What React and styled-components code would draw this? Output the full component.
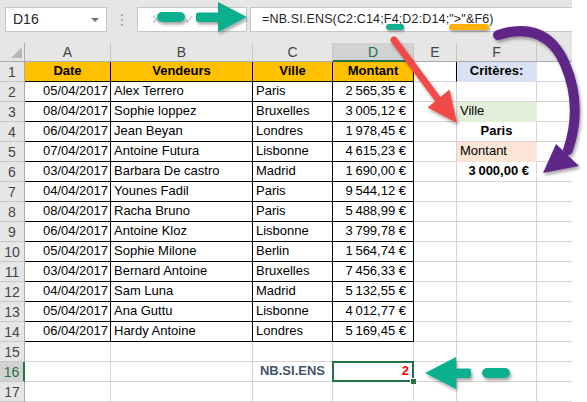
import styled, { createGlobalStyle } from "styled-components";

const GlobalStyle = createGlobalStyle`
  html, body { margin: 0; padding: 0; background: #ffffff; }
  body { font-family: "Liberation Sans", Arial, sans-serif; }
`;

const COLS = ["A", "B", "C", "D", "E", "F", "G"];
const WIDTHS = [86, 142, 80, 81, 43, 80, 80];

const sales = [
  ["05/04/2017", "Alex Terrero", "Paris", "2\u202f565,35 €"],
  ["08/04/2017", "Sophie loppez", "Bruxelles", "3\u202f005,12 €"],
  ["06/04/2017", "Jean Beyan", "Londres", "1\u202f978,45 €"],
  ["07/04/2017", "Antoine Futura", "Lisbonne", "4\u202f615,23 €"],
  ["03/04/2017", "Barbara De castro", "Madrid", "1\u202f690,00 €"],
  ["04/04/2017", "Younes Fadil", "Paris", "9\u202f544,12 €"],
  ["08/04/2017", "Racha Bruno", "Paris", "5\u202f488,99 €"],
  ["06/04/2017", "Antoine Kloz", "Lisbonne", "3\u202f799,78 €"],
  ["05/04/2017", "Sophie Milone", "Berlin", "1\u202f564,74 €"],
  ["03/04/2017", "Bernard Antoine", "Bruxelles", "7\u202f456,33 €"],
  ["04/04/2017", "Sam Luna", "Madrid", "5\u202f132,55 €"],
  ["05/04/2017", "Ana Guttu", "Lisbonne", "4\u202f012,77 €"],
  ["06/04/2017", "Hardy Antoine", "Londres", "5\u202f169,45 €"],
];

// criteria block in column F
const criteria = {
  1: { text: "Critères:", bold: true, align: "center", bg: "#d9e1f2" },
  3: { text: "Ville", align: "left", bg: "#e2efda" },
  4: { text: "Paris", bold: true, align: "center" },
  5: { text: "Montant", align: "left", bg: "#fce4d6" },
  6: { text: "3\u202f000,00 €", bold: true, align: "money" },
};

function cellFor(row, col) {
  const ci = COLS.indexOf(col);
  const inTable = row <= 14 && ci <= 3;
  const cell = { text: "", align: "left", table: inTable };

  if (row === 1 && ci <= 3) {
    return { ...cell, text: ["Date", "Vendeurs", "Ville", "Montant"][ci], bold: true, align: "center", bg: "#ffc000" };
  }
  if (row >= 2 && row <= 14 && ci <= 3) {
    const v = sales[row - 2][ci];
    return { ...cell, text: v, align: ci === 0 ? "right" : ci === 3 ? "money" : "left" };
  }
  if (col === "E" && row === 1) return { ...cell, darkRight: true };
  if (col === "F" && criteria[row]) return { ...cell, ...criteria[row] };
  if (row === 16 && col === "C") {
    return { ...cell, text: "NB.SI.ENS", bold: true, align: "center", color: "#44546a" };
  }
  if (row === 16 && col === "D") {
    return { ...cell, text: "2", bold: true, align: "right", color: "#ff0000", selected: true };
  }
  return cell;
}

export default function App() {
  const rows = Array.from({ length: 17 }, (_, i) => i + 1);

  return (
    <>
      <GlobalStyle />
      <Page>
        <Window>
          <Toolbar>
            <NameBox>
              D16
              <DropCaret />
            </NameBox>
            <Grip>
              <span />
              <span />
              <span />
            </Grip>
            <FxBox>
              <FxGlyph>✕</FxGlyph>
              <FxGlyph>✓</FxGlyph>
              <FxGlyph $italic>fx</FxGlyph>
            </FxBox>
            <FormulaInput>
              =NB.SI.ENS(C2:C14;<Mark $color="#10b08e" $shift={2} $extra={5}>F4</Mark>;D2:D14;
              <Mark $color="#ffb000" $shift={0} $extra={0}>"&gt;"&amp;F6</Mark>)
            </FormulaInput>
          </Toolbar>

          <Sheet>
            <Corner />
            {COLS.map((c) => (
              <ColHead key={c} $active={c === "D"}>
                {/* column G is cut by the window edge, its letter is not visible */}
                {c === "G" ? "" : c}
              </ColHead>
            ))}
            {rows.map((r) => (
              <Row key={r} r={r} />
            ))}
          </Sheet>
        </Window>

        <Overlay viewBox="0 0 587 402" width="587" height="402">
          <defs>
            <filter id="sh" x="-20%" y="-20%" width="140%" height="140%">
              <feDropShadow dx="1.5" dy="2.5" stdDeviation="1.6" floodColor="#000" floodOpacity="0.35" />
            </filter>
          </defs>

          {/* top teal arrow */}
          <g fill="#10b08e" filter="url(#sh)">
            <rect x="157" y="12" width="28" height="10" rx="5" />
            <rect x="196" y="12.5" width="26" height="9.5" rx="2" />
            <polygon points="218,2 247,17 218,32" />
          </g>

          {/* red arrow */}
          <g filter="url(#sh)">
            <line x1="394" y1="40" x2="437" y2="98" stroke="#f24a4a" strokeWidth="7" strokeLinecap="round" />
            <polygon points="457,123 427.5,107.5 449.5,89.5" fill="#f24a4a" />
          </g>

          {/* purple curved arrow */}
          <g filter="url(#sh)">
            <path
              d="M 498 35 Q 546 20 565 64 Q 583 106 568 150"
              fill="none"
              stroke="#5e2787"
              strokeWidth="10"
              strokeLinecap="round"
            />
            <polygon points="543,173 556,144 579,166" fill="#5e2787" />
          </g>

          {/* bottom teal arrow */}
          <g fill="#10b08e" filter="url(#sh)">
            <polygon points="425,373 456,357 456,389" />
            <rect x="452" y="368.5" width="19" height="9.5" rx="2" />
            <rect x="482" y="368" width="28" height="10" rx="5" />
          </g>
        </Overlay>
      </Page>
    </>
  );
}

function Row({ r }) {
  return (
    <>
      <RowHead $active={r === 16}>{r}</RowHead>
      {COLS.map((c) => {
        const cell = cellFor(r, c);
        return (
          <Cell
            key={c}
            $align={cell.align}
            $bold={cell.bold}
            $bg={cell.bg}
            $color={cell.color}
            $table={cell.table}
            $darkRight={cell.darkRight}
            $selected={cell.selected}
          >
            {cell.text}
          </Cell>
        );
      })}
    </>
  );
}

const Page = styled.div`
  position: relative;
  width: 587px;
  height: 402px;
  overflow: hidden;
  display: flex;
  background: #ffffff;
`;

const Window = styled.div`
  width: 572px;
  flex-shrink: 0;
  overflow: hidden;
  display: flex;
  flex-direction: column;
  background: #e6e6e6;
`;

const Toolbar = styled.div`
  height: 43px;
  box-sizing: border-box;
  padding: 7px 0 0 5px;
  display: flex;
  align-items: flex-start;
`;

const NameBox = styled.div`
  position: relative;
  width: 102px;
  height: 25px;
  box-sizing: border-box;
  border: 1px solid #c6c6c6;
  background: #ffffff;
  font-size: 14px;
  color: #262626;
  padding-left: 7px;
  line-height: 23px;
`;

const DropCaret = styled.span`
  position: absolute;
  right: 7px;
  top: 10px;
  border-left: 4px solid transparent;
  border-right: 4px solid transparent;
  border-top: 4px solid #707070;
`;

const Grip = styled.div`
  width: 30px;
  height: 25px;
  display: flex;
  flex-direction: column;
  align-items: center;
  justify-content: center;
  gap: 3px;

  span {
    width: 2px;
    height: 2px;
    background: #a8a8a8;
  }
`;

const FxBox = styled.div`
  width: 110px;
  height: 25px;
  box-sizing: border-box;
  border: 1px solid #c6c6c6;
  background: #ffffff;
  display: flex;
  align-items: center;
  gap: 22px;
  padding-left: 13px;
`;

const FxGlyph = styled.span`
  font-size: 13px;
  color: #c4c4c4;
  font-style: ${(p) => (p.$italic ? "italic" : "normal")};
`;

const FormulaInput = styled.div`
  flex: 1;
  margin-left: 3px;
  height: 25px;
  box-sizing: border-box;
  border: 1px solid #c6c6c6;
  border-right: none;
  background: #ffffff;
  padding-left: 11px;
  font-size: 12.5px;
  letter-spacing: 0.15px;
  line-height: 23px;
  color: #1f1f1f;
  white-space: nowrap;
`;

const Mark = styled.span`
  position: relative;

  &::after {
    content: "";
    position: absolute;
    left: ${(p) => p.$shift}px;
    right: ${(p) => -p.$extra}px;
    top: calc(100% - 2px);
    height: 6px;
    border-radius: 3px;
    background: ${(p) => p.$color};
    box-shadow: 1px 2px 2px rgba(0, 0, 0, 0.3);
  }
`;

const Sheet = styled.div`
  display: grid;
  grid-template-columns: 25px ${WIDTHS.map((w) => `${w}px`).join(" ")};
  grid-template-rows: 19px repeat(17, 20px);
  background: #ffffff;
  font-size: 13px;
`;

const Corner = styled.div`
  position: relative;
  background: #e6e6e6;
  border-right: 1px solid #ababab;
  border-bottom: 1px solid #ababab;

  &::after {
    content: "";
    position: absolute;
    right: 2px;
    bottom: 3px;
    border-left: 11px solid transparent;
    border-bottom: 11px solid #b8b8b8;
  }
`;

const ColHead = styled.div`
  box-sizing: border-box;
  background: ${(p) => (p.$active ? "#d2d2d2" : "#e6e6e6")};
  color: ${(p) => (p.$active ? "#217346" : "#444444")};
  border-right: 1px solid #c6c6c6;
  border-bottom: ${(p) => (p.$active ? "2px solid #217346" : "1px solid #ababab")};
  display: flex;
  align-items: center;
  justify-content: center;
  font-size: 14px;
`;

const RowHead = styled.div`
  box-sizing: border-box;
  background: ${(p) => (p.$active ? "#d2d2d2" : "#e6e6e6")};
  color: ${(p) => (p.$active ? "#217346" : "#444444")};
  border-bottom: 1px solid #c6c6c6;
  border-right: ${(p) => (p.$active ? "2px solid #217346" : "1px solid #ababab")};
  display: flex;
  align-items: center;
  justify-content: center;
  font-size: 14px;
`;

const justify = { left: "flex-start", center: "center", right: "flex-end", money: "flex-end" };

const Cell = styled.div`
  position: relative;
  box-sizing: border-box;
  min-width: 0;
  white-space: nowrap;
  display: flex;
  align-items: flex-end;
  justify-content: ${(p) => justify[p.$align]};
  padding: 0 ${(p) => (p.$align === "money" ? 7 : p.$align === "right" ? (p.$selected ? 4 : 2) : 3)}px 2px
    3px;
  line-height: 16px;
  background: ${(p) => p.$bg || "#ffffff"};
  color: ${(p) => p.$color || "#000000"};
  font-weight: ${(p) => (p.$bold ? 700 : 400)};
  border-right: 1px solid ${(p) => (p.$table || p.$darkRight ? "#000000" : p.$bg ? p.$bg : "#d4d4d4")};
  border-bottom: 1px solid ${(p) => (p.$table ? "#000000" : p.$bg ? p.$bg : "#d4d4d4")};
  z-index: ${(p) => (p.$selected ? 2 : "auto")};

  ${(p) =>
    p.$selected &&
    `
    &::before {
      content: "";
      position: absolute;
      left: -1px;
      top: -1px;
      right: -1px;
      bottom: -1px;
      border: 2px solid #217346;
    }
    &::after {
      content: "";
      position: absolute;
      right: -4px;
      bottom: -4px;
      width: 5px;
      height: 5px;
      background: #217346;
      border: 1px solid #ffffff;
    }
  `}
`;

const Overlay = styled.svg`
  position: absolute;
  left: 0;
  top: 0;
  pointer-events: none;
  z-index: 5;
`;
